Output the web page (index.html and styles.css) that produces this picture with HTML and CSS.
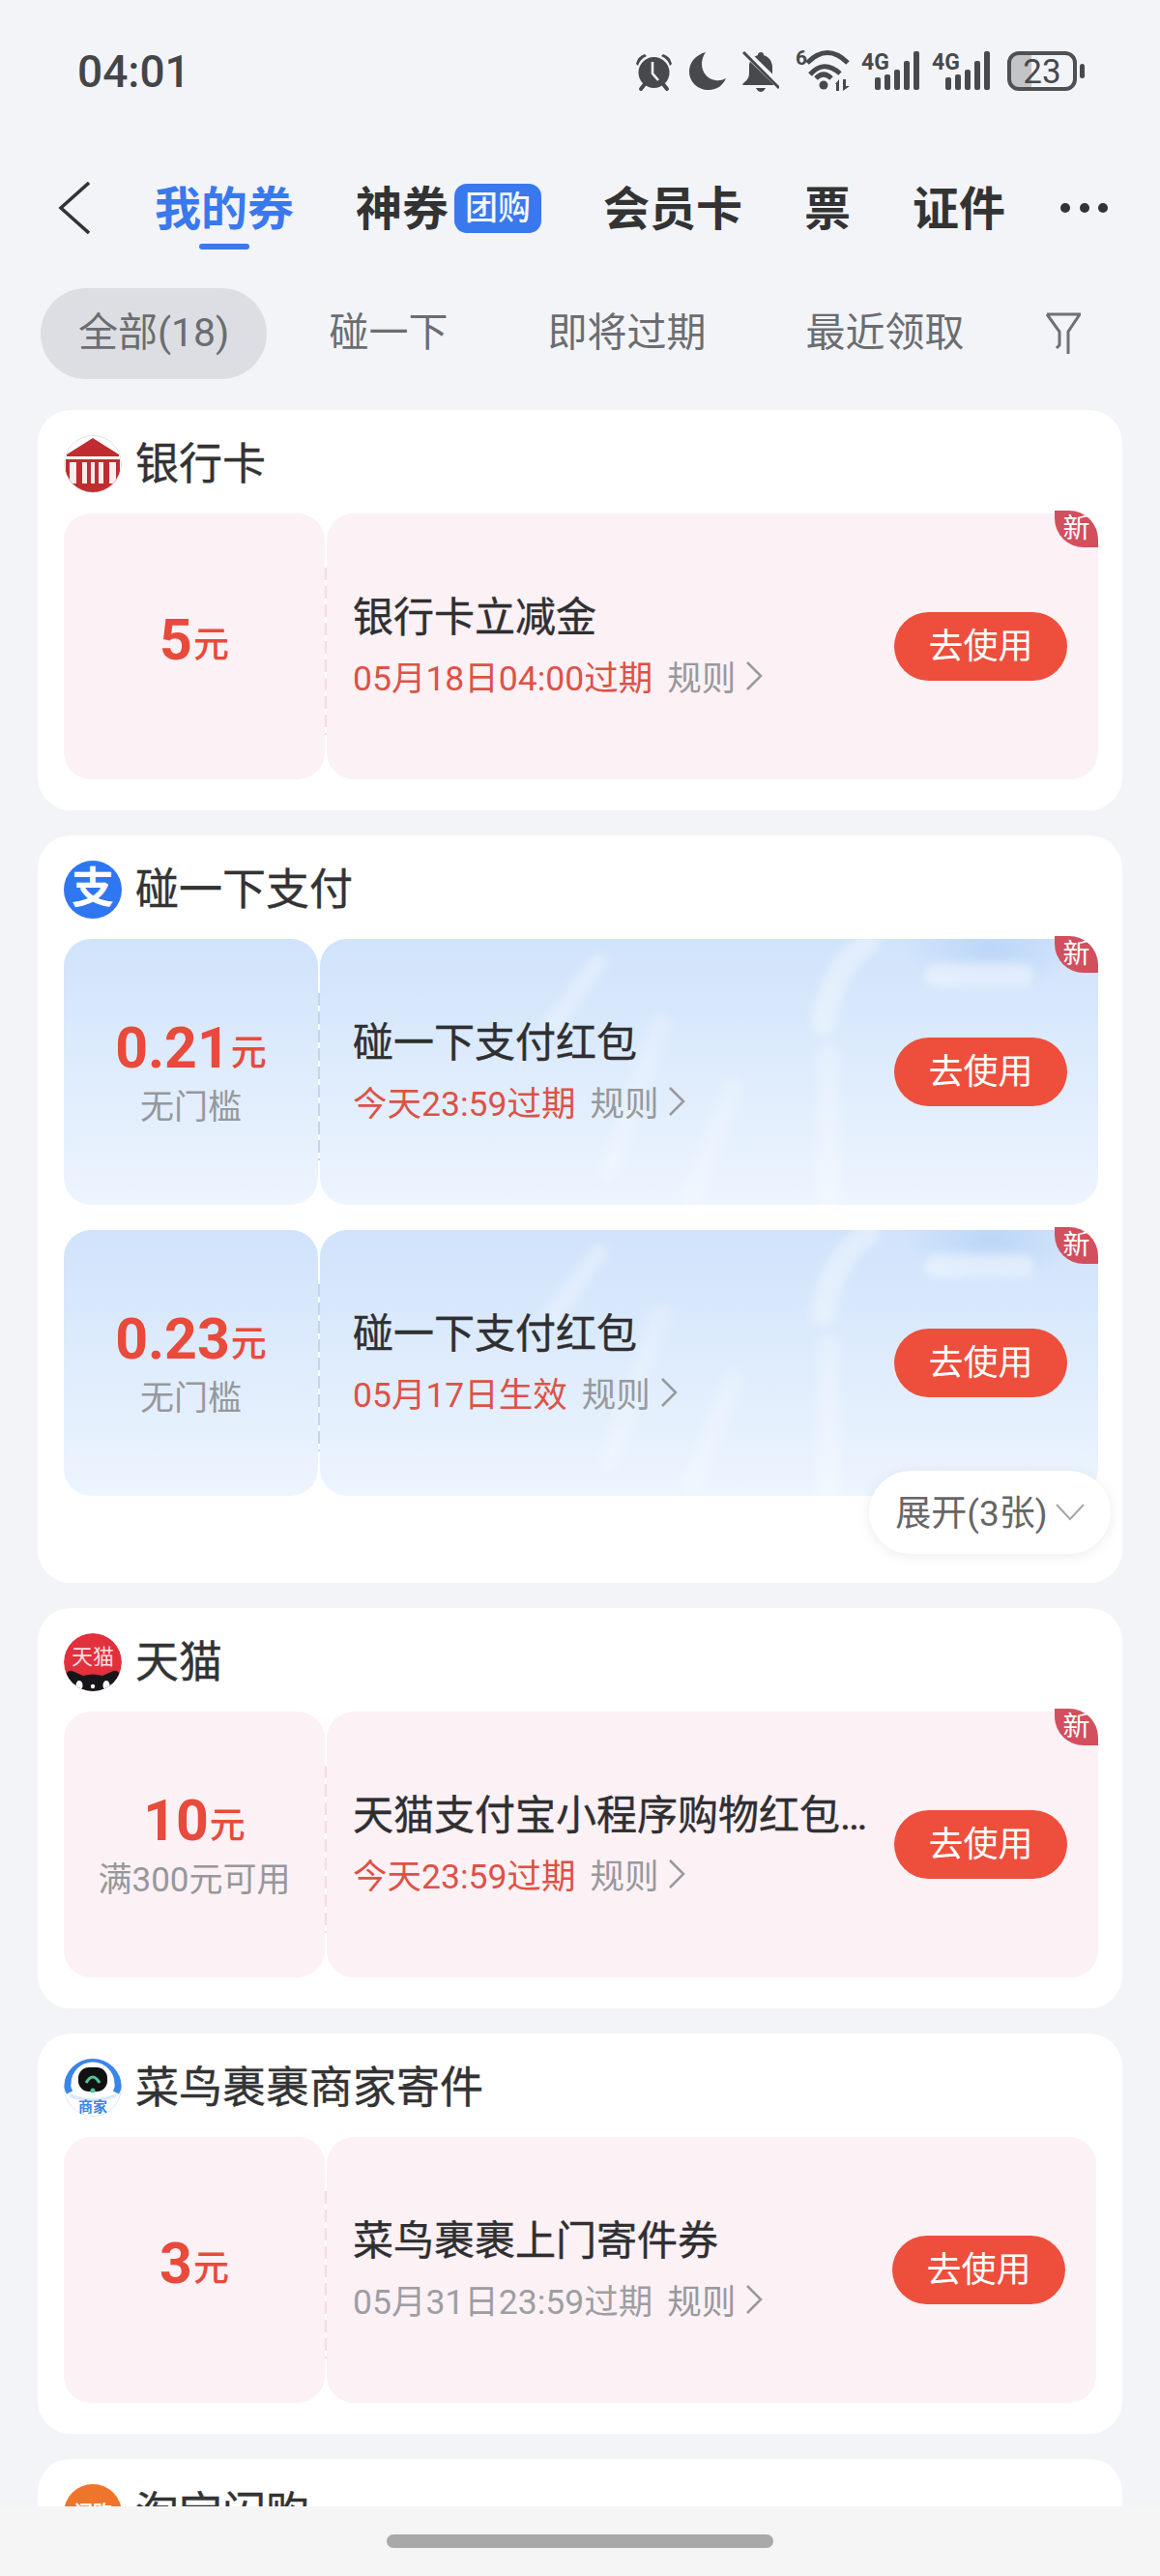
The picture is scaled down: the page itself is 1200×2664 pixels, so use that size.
FILE: index.html
```html
<!DOCTYPE html>
<html lang="zh-CN">
<head>
  <meta charset="UTF-8" />
  <meta name="viewport" content="width=device-width, initial-scale=1.0" />
  <title>我的券</title>
  <link rel="stylesheet" href="styles.css">
</head>
<body>
  <div class="page">
    <div class="status-bar">
      <div class="time">04:01</div>
      <div class="status-icons">
        <svg class="st-gap" width="39" height="40" viewBox="0 0 39 40">
          <path d="M1 11 Q3 3 10 1 L12 3 Q5 6 3 13 Z M38 11 Q36 3 29 1 L27 3 Q34 6 36 13 Z" fill="#48494c"/>
          <path d="M6 37 L10 32 M33 37 L29 32" stroke="#48494c" stroke-width="4" stroke-linecap="round"/>
          <circle cx="19.5" cy="20" r="16" fill="#48494c"/>
          <path d="M18 9 V21 L24 28" stroke="#f2f4f8" stroke-width="2.6" fill="none"/>
        </svg>
        <svg class="st-gap" width="38" height="41" viewBox="0 0 38 41">
          <path d="M17 0 C6 3 0 11 0 20 C0 31 9 39 20 39 C29 39 35 34 38 27 C34 29 31 29.500 27 29 C19 28 13 21 13 12 C13 8 14.500 3.500 17 0 Z" fill="#48494c"/>
        </svg>
        <svg class="st-gap" width="38" height="42" viewBox="0 0 38 42">
          <path d="M19 1 C21 1 22 2 22 4 C28 6 31 11 31 17 V26 L37 35 H1 C0 35 0 34 1 33 C5 30 7 27 7 22 V15 C7 10 11 6 16 4 C16 2 17 1 19 1 Z" fill="#48494c"/>
          <path d="M14 38 H24 Q22 42 19 42 Q16 42 14 38 Z" fill="#48494c"/>
          <path d="M1 -1 L40 37" stroke="#f2f4f8" stroke-width="7"/>
          <path d="M1 1 L38 38" stroke="#48494c" stroke-width="3"/>
        </svg>
        <svg width="56" height="50" viewBox="0 -5 56 50">
          <text x="0" y="17" class="st-small">6</text>
          <g fill="none" stroke="#48494c" stroke-width="5">
            <path d="M12 15 Q33 -6 54 15"/>
            <path d="M15 27 Q29 11 46 26"/>
            <path d="M21 31 Q29 23 37 31"/>
          </g>
          <circle cx="29" cy="38" r="4.500" fill="#48494c"/>
          <path d="M41 37 L45 32 V44 H42 V37 Z M49 32 H52 V39 L56 39 L49 44 Z" fill="#48494c"/>
        </svg>
        <svg width="61" height="46" viewBox="0 -4 61 46">
          <text x="0" y="19" class="st-4g">4G</text>
          <g fill="#48494c">
            <rect x="14" y="27" width="6" height="13" rx="2"/>
            <rect x="24" y="24" width="6" height="16" rx="2"/>
            <rect x="34" y="19" width="6" height="21" rx="2"/>
            <rect x="44" y="10" width="6" height="30" rx="2"/>
            <rect x="54" y="0" width="6" height="40" rx="2"/>
          </g>
        </svg>
        <svg class="st-gap" width="61" height="46" viewBox="0 -4 61 46">
          <text x="0" y="19" class="st-4g">4G</text>
          <g fill="#48494c">
            <rect x="14" y="27" width="6" height="13" rx="2"/>
            <rect x="24" y="24" width="6" height="16" rx="2"/>
            <rect x="34" y="19" width="6" height="21" rx="2"/>
            <rect x="44" y="10" width="6" height="30" rx="2"/>
            <rect x="54" y="0" width="6" height="40" rx="2"/>
          </g>
        </svg>
        <svg width="80" height="46" viewBox="0 -4 80 46">
          <path d="M12 2 H25 V38 H12 Q2 38 2 28 V12 Q2 2 12 2 Z" fill="#c3c4c7"/>
          <rect x="2" y="2" width="68" height="37" rx="10" fill="none" stroke="#4f5054" stroke-width="4"/>
          <text x="36" y="33" text-anchor="middle" class="st-batt">23</text>
          <rect x="75" y="13" width="5" height="15" rx="2.500" fill="#48494c"/>
        </svg>
      </div>
    </div>

    <div class="nav">
      <svg class="back" width="33" height="54" viewBox="0 0 33 54">
        <path d="M32 1 L3 27 L32 53" fill="none" stroke="#333" stroke-width="3.500"/>
      </svg>
      <div class="tab active">我的券</div>
      <div class="tab-group">
        <div class="tab">神券</div>
        <div class="tuan">团购</div>
      </div>
      <div class="tab">会员卡</div>
      <div class="tab">票</div>
      <div class="tab">证件</div>
      <div class="more"><i></i><i></i><i></i></div>
    </div>

    <div class="filters">
      <div class="filter selected">全部(18)</div>
      <div class="filter">碰一下</div>
      <div class="filter">即将过期</div>
      <div class="filter">最近领取</div>
      <svg class="funnel" width="36" height="44" viewBox="0 0 36 44">
        <path d="M1 2 H35 L23 20 V43 M1 2 L14 20 V34 L11 37" fill="none" stroke="#6f7175" stroke-width="3"/>
      </svg>
    </div>

    <div class="list">
      <div class="card">
        <div class="card-head">
          <svg class="logo" viewBox="0 0 60 60">
            <defs><clipPath id="round"><circle cx="30" cy="30" r="29"/></clipPath></defs>
            <circle cx="30" cy="30" r="29.500" fill="#fff" stroke="#dedede"/>
            <g clip-path="url(#round)">
              <path d="M30 3 L57 20 V22 H3 V20 Z" fill="#c12c30"/>
              <path d="M2 25 H58 V60 H2 Z" fill="#c12c30"/>
              <path d="M6 28 h7 v22 h-7 Z M19 28 h5 v22 h-5 Z M28 28 h4 v22 h-4 Z M36 28 h5 v22 h-5 Z M47 28 h7 v22 h-7 Z" fill="#fff" fill-opacity=".92"/>
            </g>
          </svg>
          <div class="card-name">银行卡</div>
        </div>
        <div class="coupon pink">
          <div class="stub">
            <div class="amount"><span class="num">5</span><span class="unit">元</span></div>
          </div>
          <div class="main">
            <div class="info">
              <div class="coupon-title">银行卡立减金</div>
              <div class="meta"><span class="date">05月18日04:00过期</span><span class="rule">规则</span>
                <svg class="rule-arrow" width="18" height="30" viewBox="0 0 18 30"><path d="M2 1 L16 15 L2 29"/></svg>
              </div>
            </div>
            <div class="use-btn">去使用</div>
            <div class="new-tag">新</div>
          </div>
        </div>
      </div>

      <div class="card card-more">
        <div class="card-head">
          <div class="logo logo-ali">支</div>
          <div class="card-name">碰一下支付</div>
        </div>
        <div class="coupon blue">
          <div class="stub">
            <div class="amount"><span class="num">0.21</span><span class="unit">元</span></div>
            <div class="cond">无门槛</div>
          </div>
          <div class="main">
            <svg class="decor" viewBox="0 0 805 275">
              <use href="#streaks"/>
            </svg>
            <div class="info">
              <div class="coupon-title">碰一下支付红包</div>
              <div class="meta"><span class="date">今天23:59过期</span><span class="rule">规则</span>
                <svg class="rule-arrow" width="18" height="30" viewBox="0 0 18 30"><path d="M2 1 L16 15 L2 29"/></svg>
              </div>
            </div>
            <div class="use-btn">去使用</div>
            <div class="new-tag">新</div>
          </div>
        </div>
        <div class="coupon blue">
          <div class="stub">
            <div class="amount"><span class="num">0.23</span><span class="unit">元</span></div>
            <div class="cond">无门槛</div>
          </div>
          <div class="main">
            <svg class="decor" viewBox="0 0 805 275">
              <defs>
                <filter id="soft"><feGaussianBlur stdDeviation="4"/></filter>
                <radialGradient id="spot"><stop offset="0" stop-color="#bcd6f8"/><stop offset="1" stop-color="#bcd6f8" stop-opacity="0"/></radialGradient>
                <g id="streaks">
                  <ellipse cx="695" cy="10" rx="90" ry="45" fill="url(#spot)"/>
                  <g fill="none" stroke="#fff" stroke-linecap="round" filter="url(#soft)">
                    <path d="M288 24 L240 90" stroke-width="18" stroke-opacity=".28"/>
                    <path d="M352 90 L299 240" stroke-width="20" stroke-opacity=".2"/>
                    <path d="M427 154 L385 265" stroke-width="20" stroke-opacity=".2"/>
                    <path d="M567 4 Q528 30 521 87" stroke-width="24" stroke-opacity=".36"/>
                    <path d="M526 120 V270" stroke-width="22" stroke-opacity=".26"/>
                    <path d="M638 37 H726" stroke-width="24" stroke-opacity=".42"/>
                  </g>
                </g>
              </defs>
              <use href="#streaks"/>
            </svg>
            <div class="info">
              <div class="coupon-title">碰一下支付红包</div>
              <div class="meta"><span class="date">05月17日生效</span><span class="rule">规则</span>
                <svg class="rule-arrow" width="18" height="30" viewBox="0 0 18 30"><path d="M2 1 L16 15 L2 29"/></svg>
              </div>
            </div>
            <div class="use-btn">去使用</div>
            <div class="new-tag">新</div>
          </div>
        </div>
        <div class="expand">
          <span class="expand-text">展开(3张)</span>
          <svg width="30" height="18" viewBox="0 0 30 18"><path d="M1 1 L15 16 L29 1" fill="none" stroke="#a4a5a8" stroke-width="2"/></svg>
        </div>
      </div>

      <div class="card">
        <div class="card-head">
          <svg class="logo" viewBox="0 0 60 60">
            <defs><clipPath id="round2"><circle cx="30" cy="30" r="30"/></clipPath></defs>
            <circle cx="30" cy="30" r="30" fill="#e2303d"/>
            <text x="30" y="32" text-anchor="middle" class="logo-text">天猫</text>
            <g clip-path="url(#round2)">
              <path d="M2 60 V44 Q4 36 11 40 L20 44 Q30 41 40 44 L49 40 Q56 36 58 44 V60 Z" fill="#16161a"/>
              <ellipse cx="16" cy="54" rx="3.500" ry="5" fill="#fff"/>
              <ellipse cx="44" cy="54" rx="3.500" ry="5" fill="#fff"/>
              <circle cx="30" cy="55" r="2.200" fill="#fff"/>
            </g>
          </svg>
          <div class="card-name">天猫</div>
        </div>
        <div class="coupon pink">
          <div class="stub">
            <div class="amount"><span class="num">10</span><span class="unit">元</span></div>
            <div class="cond">满300元可用</div>
          </div>
          <div class="main">
            <div class="info">
              <div class="coupon-title clip">天猫支付宝小程序购物红包券</div>
              <div class="meta"><span class="date">今天23:59过期</span><span class="rule">规则</span>
                <svg class="rule-arrow" width="18" height="30" viewBox="0 0 18 30"><path d="M2 1 L16 15 L2 29"/></svg>
              </div>
            </div>
            <div class="use-btn">去使用</div>
            <div class="new-tag">新</div>
          </div>
        </div>
      </div>

      <div class="card">
        <div class="card-head">
          <svg class="logo" viewBox="0 0 60 60">
            <circle cx="30" cy="30" r="29.500" fill="#fff" stroke="#d5e6f8"/>
            <path d="M6 35 Q3 29 4 26 A26 26 0 0 1 56 26 Q57 29 54 35" fill="none" stroke="#3a86e8" stroke-width="7"/>
            <path d="M6 36 Q30 46 54 36 L54 40 Q30 48 6 40 Z" fill="#dbe9fa"/>
            <rect x="15" y="9" width="30" height="25" rx="11" fill="#111"/>
            <path d="M23 25 Q30 13 37 25" fill="none" stroke="#4fc79a" stroke-width="3"/>
            <circle cx="30" cy="33" r="2.500" fill="#4fc79a"/>
            <text x="30" y="55" text-anchor="middle" class="logo-tag">商家</text>
          </svg>
          <div class="card-name">菜鸟裹裹商家寄件</div>
        </div>
        <div class="coupon pink shift">
          <div class="stub">
            <div class="amount"><span class="num">3</span><span class="unit">元</span></div>
          </div>
          <div class="main">
            <div class="info">
              <div class="coupon-title">菜鸟裹裹上门寄件券</div>
              <div class="meta"><span class="date gray">05月31日23:59过期</span><span class="rule">规则</span>
                <svg class="rule-arrow" width="18" height="30" viewBox="0 0 18 30"><path d="M2 1 L16 15 L2 29"/></svg>
              </div>
            </div>
            <div class="use-btn">去使用</div>
          </div>
        </div>
      </div>

      <div class="card">
        <div class="card-head">
          <div class="logo logo-shan">闪购</div>
          <div class="card-name">淘宝闪购</div>
        </div>
      </div>
    </div>

    <div class="home-bar"><div class="home-pill"></div></div>
  </div>
</body>
</html>
```

FILE: styles.css
```css
* {
  box-sizing: border-box;
}
body {
  margin: 0;
  font-family: Roboto, "Noto Sans CJK SC", sans-serif;
  color: #333;
  background-color: #f2f4f8;
}
.page {
  position: relative;
  width: 1200px;
  height: 2664px;
  overflow: hidden;
}

/* status bar */
.status-bar {
  display: flex;
  justify-content: space-between;
  align-items: center;
  height: 148px;
  padding: 0 78px 0 80px;
}
.time {
  font-size: 46px;
  font-weight: 500;
  color: #444548;
}
.status-icons {
  display: flex;
  align-items: flex-end;
  gap: 12px;
  margin-bottom: 8px;
}
.st-gap {
  margin-right: 5px;
}
.st-small {
  font-size: 21px;
  font-weight: 700;
  fill: #48494c;
}
.st-4g {
  font-size: 23px;
  font-weight: 700;
  fill: #48494c;
}
.st-batt {
  font-size: 35px;
  fill: #48494c;
}

/* top tabs */
.nav {
  position: relative;
  display: flex;
  align-items: center;
  gap: 64px;
  height: 134px;
  padding-left: 60px;
}
.back {
  margin-right: 3px;
}
.tab {
  position: relative;
  padding-top: 3px;
  font-size: 48px;
  font-weight: 700;
  line-height: 60px;
  color: #333;
}
.tab.active {
  color: #3a78ee;
}
.tab.active::after {
  content: "";
  position: absolute;
  left: 46px;
  top: 68px;
  width: 52px;
  height: 6px;
  border-radius: 3px;
  background-color: #3a78ee;
}
.tab-group {
  display: flex;
  align-items: center;
  gap: 6px;
}
.tuan {
  width: 90px;
  height: 51px;
  border-radius: 13px;
  background-color: #3a78ee;
  color: #f2f6ff;
  font-size: 34px;
  font-weight: 500;
  line-height: 51px;
  text-align: center;
}
.more {
  display: flex;
  gap: 9.500px;
  margin-left: -7px;
}
.more i {
  width: 10px;
  height: 10px;
  border-radius: 50%;
  background-color: #333;
}

/* filter row */
.filters {
  display: flex;
  align-items: center;
  gap: 25px;
  height: 94px;
  margin: 16px 0 32px;
  padding-left: 42px;
}
.filter {
  height: 94px;
  padding: 0 39px;
  border-radius: 47px;
  font-size: 41px;
  line-height: 92px;
  color: #6b6d70;
}
.filter.selected {
  background-color: #dcdee3;
}
.funnel {
  margin-left: 21px;
}

/* cards */
.list {
  display: flex;
  flex-direction: column;
  gap: 26px;
  padding: 0 39px;
}
.card {
  position: relative;
  padding: 26px 25px 32px 27px;
  border-radius: 34px;
  background-color: #fff;
}
.card-more {
  padding-bottom: 90px;
}
.card-head {
  display: flex;
  align-items: center;
  gap: 14px;
  height: 60px;
  margin-bottom: 21px;
}
.logo {
  flex: none;
  width: 60px;
  height: 60px;
  border-radius: 50%;
}
.logo-ali {
  background-color: #2f77f1;
  color: #fff;
  font-size: 44px;
  font-weight: 700;
  line-height: 58px;
  text-align: center;
}
.logo-shan {
  background-color: #f0752c;
  color: #fff;
  font-size: 20px;
  font-weight: 700;
  line-height: 60px;
  text-align: center;
}
.logo-text {
  font-size: 22px;
  fill: #fbdfe2;
}
.logo-tag {
  font-size: 15px;
  font-weight: 700;
  fill: #3a86e8;
}
.card-name {
  padding-top: 2px;
  font-size: 45px;
  line-height: 60px;
  color: #333;
  -webkit-text-stroke: 0.4px #333;
}

/* coupon */
.coupon {
  display: flex;
  gap: 2px;
  height: 275px;
}
.coupon + .coupon {
  margin-top: 26px;
}
.shift {
  margin-right: 2px;
}
.stub {
  position: relative;
  flex: none;
  display: flex;
  flex-direction: column;
  align-items: center;
  justify-content: center;
  width: 270px;
  border-radius: 28px;
}
.stub::after {
  content: "";
  position: absolute;
  top: 56px;
  bottom: 46px;
  right: -2px;
  width: 2px;
  background: repeating-linear-gradient(to bottom, #f5dbe4 0 13px, transparent 13px 19px);
}
.main {
  position: relative;
  flex: 1;
  display: flex;
  align-items: center;
  justify-content: space-between;
  padding: 0 32px 0 27px;
  border-radius: 28px;
}
.pink .stub,
.pink .main {
  background-color: #fcf1f5;
}
.blue .stub,
.blue .main {
  background: linear-gradient(to bottom, #d0e3fb, #edf5fe);
}
.blue .stub {
  width: 263px;
}
.blue .stub::after {
  background: repeating-linear-gradient(to bottom, #c6d5e8 0 13px, transparent 13px 19px);
}
.blue .main {
  padding-left: 34px;
}
.decor {
  position: absolute;
  left: 0;
  top: 0;
  width: 100%;
  height: 100%;
  border-radius: 28px;
}
.amount {
  line-height: 59px;
  color: #e84a3b;
}
.num {
  font-size: 59px;
  font-weight: 700;
}
.unit {
  margin-left: 1px;
  font-size: 37px;
  font-weight: 500;
  vertical-align: 2px;
}
.cond {
  font-size: 35px;
  line-height: 35px;
  color: #96989c;
}
.info {
  position: relative;
  min-width: 0;
}
.coupon-title {
  font-size: 42px;
  line-height: 64px;
  color: #2f2f31;
  -webkit-text-stroke: 0.4px #2f2f31;
}
.clip {
  width: 540px;
  white-space: nowrap;
  overflow: hidden;
  text-overflow: ellipsis;
}
.meta {
  display: flex;
  align-items: center;
  height: 64px;
  margin-top: -4px;
  font-size: 35.500px;
}
.date {
  color: #dd5247;
}
.date.gray {
  color: #9d9ea2;
}
.rule {
  margin: 0 10px 0 15px;
  color: #97999d;
}
.rule-arrow path {
  fill: none;
  stroke: #97999d;
  stroke-width: 2.500;
}
.use-btn {
  position: relative;
  flex: none;
  width: 179px;
  height: 71px;
  border-radius: 36px;
  background-color: #ed4f3c;
  color: #fff;
  font-size: 36px;
  line-height: 73px;
  text-align: center;
}
.new-tag {
  position: absolute;
  top: -3px;
  right: 0;
  width: 45px;
  height: 38px;
  border-radius: 0 30px 0 30px;
  background-color: #d24f5e;
  color: #fff;
  font-size: 28px;
  line-height: 38px;
  text-align: center;
}
.expand {
  position: absolute;
  right: 12px;
  bottom: 30px;
  display: flex;
  align-items: center;
  justify-content: center;
  gap: 8px;
  width: 250px;
  height: 86px;
  border-radius: 43px;
  background-color: #fff;
  box-shadow: 0 2px 14px rgba(0, 0, 0, 0.08);
  font-size: 37px;
  color: #666;
}
.expand-text {
  padding-bottom: 5px;
}

/* bottom gesture bar */
.home-bar {
  position: absolute;
  left: 0;
  right: 0;
  bottom: 0;
  height: 72px;
  padding-top: 29px;
  background-color: #f5f5f6;
}
.home-pill {
  width: 400px;
  height: 14px;
  margin: 0 auto;
  border-radius: 7px;
  background-color: #a9a9a9;
}
```
